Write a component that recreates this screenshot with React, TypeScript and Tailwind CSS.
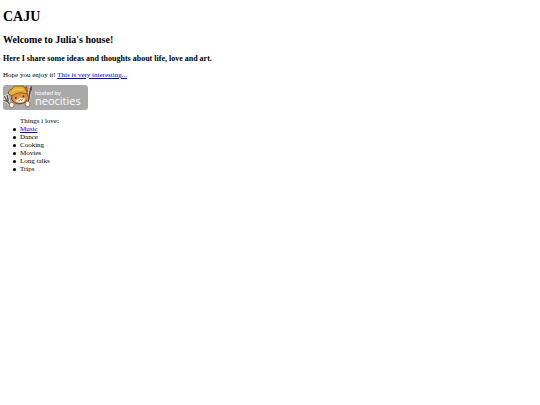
const HOBBIES = [
  { name: "Music", href: "#music" },
  { name: "Dance" },
  { name: "Cooking" },
  { name: "Movies" },
  { name: "Long talks" },
  { name: "Trips" },
];

function NeocitiesBadge() {
  return (
    <svg viewBox="0 0 85 25" role="img" aria-label="Hosted by Neocities" className="block w-[85px] h-[25px]">
      <rect width="85" height="25" rx="3" fill="#a9a9a9" />

      {/* Fork */}
      <path d="M1.500 11.500l2.500 4.500M4.200 10.500l1 5M1 15.500l3.500 1M4.300 16.300l3.600 4.200" stroke="#e8e6e4" strokeWidth="2.800" strokeLinecap="round" fill="none" />
      <path d="M1.500 11.500l2.500 4.500M4.200 10.500l1 5M1 15.500l3.500 1M4.300 16.300l3.600 4.200" stroke="#55504e" strokeWidth="1.300" strokeLinecap="round" fill="none" />

      {/* Head */}
      <path d="M9 7l-.3 7c1 3.500 4.500 5 8.300 4.800c3.600-.2 6.800-2 7.600-5.200c.4-2.500-.3-5-1.600-7z" fill="#e8903c" stroke="#51392b" strokeWidth=".9" />
      <path d="M12.500 15.500c1.500-.5 3-1 4-3c1.300.5 3 1 5.700 1c-.5 2.500-2.200 3.900-4.500 4.100c-2.100.1-4-.6-5.200-2.100z" fill="#fff1de" />
      <path d="M21 3.500l2.500-2l.8 5z" fill="#e8903c" stroke="#51392b" strokeWidth=".7" />
      <path d="M5.500 8.500c-.5-2.500 1.500-4 3.300-4c1-3 4.200-4 6.800-3c3-1.500 6.500.3 7 3.400c1.500 1 1.700 3 .5 4.100c-3.600-1.800-8-1.500-12 .8c-2 1.400-4.600.8-5.600-1.300z" fill="#e6ae32" stroke="#685022" strokeWidth=".8" />
      <path d="M8.500 7c3-2.800 7-3.300 11.500-2.600" stroke="#f6d25e" strokeWidth="1" strokeLinecap="round" fill="none" />
      <circle cx="12.800" cy="12.800" r=".9" fill="#382b27" />
      <circle cx="20.500" cy="11.300" r=".9" fill="#382b27" />
      <path d="M15.500 15.300c1 .7 1.700.3 2-.7c.6.8 1.500.8 2.200 0" stroke="#54372d" strokeWidth=".8" fill="none" />

      {/* Brush */}
      <path d="M27.500 3l-2.200 14" stroke="#dedad8" strokeWidth="3" strokeLinecap="round" />
      <path d="M27 6.500l-2 11.500" stroke="#5b3a34" strokeWidth="1.500" strokeLinecap="round" />
      <path d="M28.500.8c1 2 .8 4.500-1 6.400c-1.800-1.500-1.200-4.400 1-6.400z" fill="#94303a" />

      {/* Paws */}
      <ellipse cx="8.700" cy="20" rx="2.500" ry="2.700" fill="#fff3df" stroke="#8a5a38" strokeWidth=".8" />
      <ellipse cx="24.600" cy="19" rx="2.500" ry="2.700" fill="#fff3df" stroke="#8a5a38" strokeWidth=".8" />

      <text x="32" y="10" fontFamily="Lato, sans-serif" fontSize="6" fill="#fff">hosted by</text>
      <text x="32" y="20" fontFamily="Open Sans, sans-serif" fontSize="11" fill="#fff">neocities</text>
    </svg>
  );
}

export default function App() {
  return (
    <main className="px-[3px] pt-2.5 font-['Liberation_Serif',serif] text-[7px] leading-2 text-black">
      <h1 className="text-[14px] leading-[14px] font-bold">CAJU</h1>
      <h2 className="mt-2.5 text-[10px] leading-3 font-bold">Welcome to Julia's house!</h2>
      <h3 className="mt-2 text-[8px] leading-[10px] font-bold">
        Here I share some ideas and thoughts about life, love and art.
      </h3>
      <p className="mt-[7px]">
        Hope you enjoy it!{" "}
        <a href="#interesting" className="text-[#0000ee] underline">
          This is very interesting...
        </a>
      </p>
      <a href="#neocities" className="mt-[6px] block w-fit">
        <NeocitiesBadge />
      </a>

      <section className="mt-[7px] pl-[17px]">
        <p>Things i love:</p>
        <ul>
          {HOBBIES.map((hobby) => (
            <li
              key={hobby.name}
              className="-ml-[7px] flex items-center gap-1 before:size-[3px] before:rounded-full before:bg-black"
            >
              {hobby.href ? (
                <a href={hobby.href} className="text-[#0000ee] underline">
                  {hobby.name}
                </a>
              ) : (
                hobby.name
              )}
            </li>
          ))}
        </ul>
      </section>
    </main>
  );
}
